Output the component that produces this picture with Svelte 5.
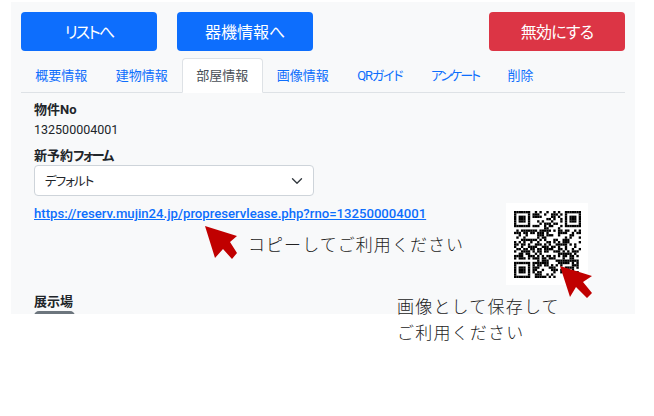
<script>
  const tabs = [
    { name: '概要情報' },
    { name: '建物情報' },
    { name: '部屋情報' },
    { name: '画像情報' },
    { name: 'QRガイド', kana: 'tight' },
    { name: 'アンケート', kana: 'tighter' },
    { name: '削除' },
  ]
  const activeTab = '部屋情報'
  const url = 'https://reserv.mujin24.jp/propreservlease.php?rno=132500004001'

  // 29 module code, finder patterns are real, the rest is seeded noise
  const size = 29
  function finder(x, y) {
    const dx = x < 8 ? x : x >= size - 8 ? x - (size - 7) : -1
    const dy = y < 8 ? y : y >= size - 8 ? y - (size - 7) : -1
    if (dx < 0 || dy < 0 || dx > 6 || dy > 6) return null
    if (x >= size - 8 && y >= size - 8) return null
    if (dx === 0 || dy === 0 || dx === 6 || dy === 6) return true
    if (dx === 1 || dy === 1 || dx === 5 || dy === 5) return false
    return true
  }
  let seed = 132500
  function noise() {
    seed = (seed * 1103515245 + 12345) & 0x7fffffff
    return (seed >> 16) % 100 < 52
  }
  const cells = []
  for (let y = 0; y < size; y++) {
    for (let x = 0; x < size; x++) {
      let on = noise()
      // quiet strip round the finders
      if ((x === 7 && y < 8) || (x === size - 8 && y < 8)) on = false
      if ((y === 7 && x < 8) || (y === 7 && x >= size - 8)) on = false
      if ((y === size - 8 && x < 8) || (x === 7 && y >= size - 8)) on = false
      const f = finder(x, y)
      if (f !== null) on = f
      if (on) cells.push({ x, y })
    }
  }
</script>

<div class="panel">
  <div class="actions">
    <div class="left">
      <button class="btn primary list-btn">リストへ</button>
      <button class="btn primary">器機情報へ</button>
    </div>
    <button class="btn danger">無効にする</button>
  </div>

  <ul class="tabs">
    {#each tabs as tab}
      <li class="tab {tab.kana || ''}" class:active={tab.name === activeTab}>{tab.name}</li>
    {/each}
  </ul>

  <div class="body">
    <div class="label first">物件No</div>
    <div class="value">132500004001</div>
    <div class="label form-label">新予約<span class="kana">フォーム</span></div>
    <div class="select">
      <span class="select-text">デフォルト</span>
      <svg width="12" height="12" viewBox="0 0 16 16" fill="none" stroke="#343a40" stroke-width="1.8" stroke-linecap="round" stroke-linejoin="round">
        <path d="M2 5l6 6 6-6" />
      </svg>
    </div>
    <a class="link" href={url}>{url}</a>
    <div class="label showroom">展示場</div>
    <div class="switch"><span class="knob"></span></div>
  </div>
</div>

<!-- annotations pasted on top of the capture -->
<svg class="arrow arrow-link" width="35" height="36" viewBox="0 0 35 36">
  <path d="M0 1L32 11L25 17L32 28L27 34L18 24L10 33Z" fill="#c00000" />
</svg>
<div class="note note-copy">コピーしてご利用ください</div>

<div class="qr">
  <svg width="67" height="67" viewBox="0 0 29 29">
    {#each cells as c}
      <rect x={c.x} y={c.y} width="1.02" height="1.02" fill="#000" />
    {/each}
  </svg>
</div>
<svg class="arrow arrow-qr" width="35" height="36" viewBox="0 0 35 36">
  <path d="M0 1L32 11L23 17L32 28L27 33L16 22L10 32Z" fill="#c00000" />
</svg>
<div class="note note-save">画像として保存して<br />ご利用ください</div>

<style>
  :global(body) {
    background: #fff;
    font-family: Roboto, "Noto Sans CJK JP", sans-serif;
    font-feature-settings: "palt";
    color: #212529;
  }

  .panel {
    box-sizing: border-box;
    width: 624px;
    height: 312px;
    margin: 2px 0 0 11px;
    padding: 10px 10px 0;
    background: #f8f9fa;
    overflow: hidden;
  }

  .actions {
    display: flex;
    justify-content: space-between;
  }

  .left {
    display: flex;
    gap: 20px;
  }

  .btn {
    width: 136px;
    height: 39px;
    border: none;
    border-radius: 4px;
    color: #fff;
    font: inherit;
    font-feature-settings: inherit;
    font-size: 16px;
    padding: 0 0 2px;
  }

  .list-btn {
    letter-spacing: -1.8px;
  }

  .primary {
    background: #0d6efd;
  }

  .danger {
    background: #dc3545;
    letter-spacing: -0.8px;
  }

  .tabs {
    display: flex;
    margin: 7px 0 0;
    padding: 0;
    list-style: none;
    border-bottom: 1px solid #dee2e6;
    height: 34px;
  }

  .tab {
    box-sizing: border-box;
    height: 35px;
    padding: 0 13.25px;
    border: 1px solid transparent;
    border-radius: 4px 4px 0 0;
    color: #0d6efd;
    font-size: 13px;
    line-height: 33px;
    white-space: nowrap;
  }

  .tab.tight {
    letter-spacing: -1.2px;
  }

  .tab.tighter {
    letter-spacing: -2px;
  }

  .tab.active {
    background: #fff;
    border-color: #dee2e6 #dee2e6 #fff;
    color: #495057;
  }

  .body {
    padding-left: 13px;
    font-size: 13px;
  }

  .label {
    font-weight: 700;
    line-height: 18px;
  }

  .kana {
    letter-spacing: -1.7px;
  }

  .first {
    padding-top: 8px;
  }

  .value {
    margin-top: 2px;
    line-height: 18px;
    font-size: 12.5px;
  }

  .form-label {
    margin-top: 8px;
  }

  .select {
    box-sizing: border-box;
    display: flex;
    align-items: center;
    justify-content: space-between;
    width: 280px;
    height: 31px;
    padding: 0 10.5px 0 10px;
    background: #fff;
    border: 1px solid #ced4da;
    border-radius: 4px;
    font-size: 12.5px;
  }

  .select-text {
    letter-spacing: -1px;
  }

  .link {
    display: block;
    margin-top: 9px;
    color: #0d6efd;
    font-size: 13.15px;
    font-weight: 500;
    line-height: 18px;
  }

  .showroom {
    margin-top: 70px;
  }

  .switch {
    width: 41px;
    height: 20px;
    border-radius: 5px;
    background: #6c757d;
    padding-top: 4px;
    box-sizing: border-box;
  }

  .knob {
    display: block;
    width: 14px;
    height: 14px;
    margin-left: 2px;
    border-radius: 50%;
    background: #fff;
  }

  .arrow {
    position: absolute;
  }

  .arrow-link {
    left: 205px;
    top: 225px;
  }

  .arrow-qr {
    left: 560px;
    top: 265px;
  }

  .note {
    position: absolute;
    color: #222;
    font-size: 17px;
    font-weight: 300;
    font-feature-settings: normal;
    letter-spacing: 1.2px;
    line-height: 26px;
  }

  .note-copy {
    left: 248px;
    top: 232px;
    letter-spacing: 1.05px;
  }

  .note-save {
    left: 397px;
    top: 294px;
  }

  .qr {
    position: absolute;
    left: 506px;
    top: 203px;
    width: 82px;
    height: 82px;
    display: flex;
    align-items: center;
    justify-content: center;
    background: #fff;
  }
</style>
